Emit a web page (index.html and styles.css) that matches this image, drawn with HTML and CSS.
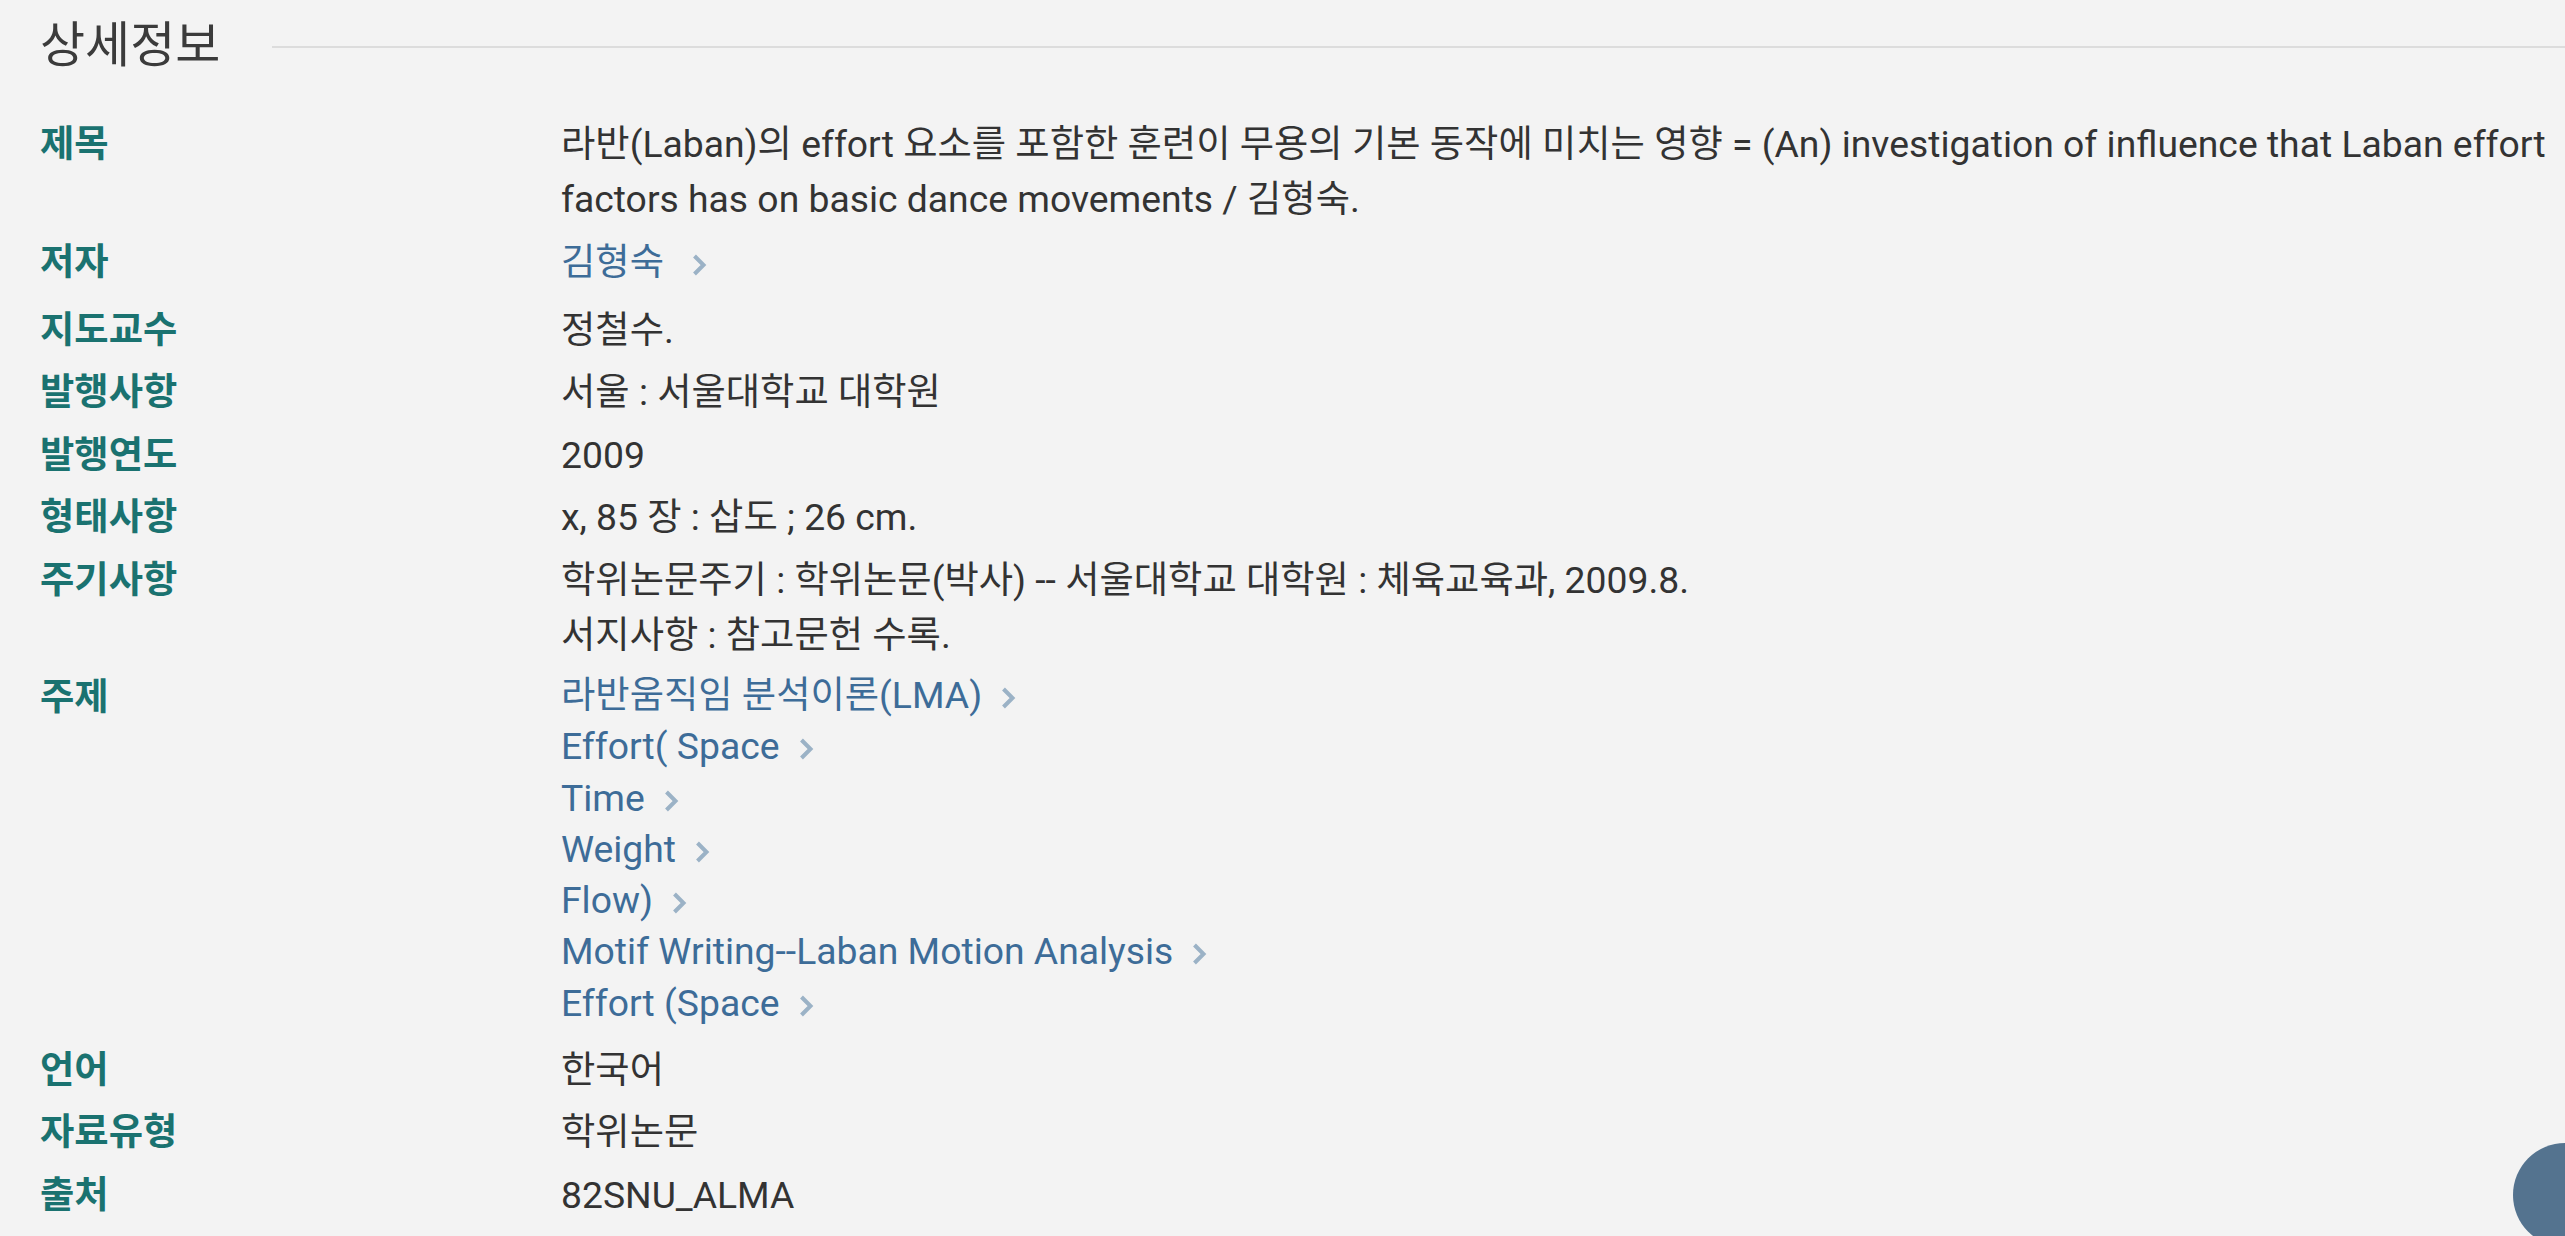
FILE: index.html
```html
<!DOCTYPE html>
<html lang="ko">
<head>
<meta charset="utf-8">
<title>상세정보</title>
<link rel="stylesheet" href="styles.css">
</head>
<body>
<div class="detail">
  <div class="section-head">
    <h2 class="section-title">상세정보</h2>
    <span class="section-rule"></span>
  </div>
  <dl class="fields">
    <div class="row">
      <dt class="label">제목</dt>
      <dd class="value">라반(Laban)의 effort 요소를 포함한 훈련이 무용의 기본 동작에 미치는 영향 = (An) investigation of influence that Laban effort factors has on basic dance movements / 김형숙.</dd>
    </div>
    <div class="row row-author">
      <dt class="label">저자</dt>
      <dd class="value"><a class="link" href="#">김형숙<svg class="chev chev-author" viewBox="0 0 15 24" width="15" height="24"><path d="M2.5 3 L11.5 12 L2.5 21"/></svg></a></dd>
    </div>
    <div class="row">
      <dt class="label">지도교수</dt>
      <dd class="value">정철수.</dd>
    </div>
    <div class="row">
      <dt class="label">발행사항</dt>
      <dd class="value">서울 : 서울대학교 대학원</dd>
    </div>
    <div class="row">
      <dt class="label">발행연도</dt>
      <dd class="value">2009</dd>
    </div>
    <div class="row">
      <dt class="label">형태사항</dt>
      <dd class="value">x, 85 장 : 삽도 ; 26 cm.</dd>
    </div>
    <div class="row">
      <dt class="label">주기사항</dt>
      <dd class="value">학위논문주기 : 학위논문(박사) -- 서울대학교 대학원 : 체육교육과, 2009.8.<br>서지사항 : 참고문헌 수록.</dd>
    </div>
    <div class="row">
      <dt class="label">주제</dt>
      <dd class="value">
        <ul class="subjects">
          <li><a class="link" href="#">라반움직임 분석이론(LMA)<svg class="chev" viewBox="0 0 15 24" width="15" height="24"><path d="M2.5 3 L11.5 12 L2.5 21"/></svg></a></li>
          <li><a class="link" href="#">Effort( Space<svg class="chev" viewBox="0 0 15 24" width="15" height="24"><path d="M2.5 3 L11.5 12 L2.5 21"/></svg></a></li>
          <li><a class="link" href="#">Time<svg class="chev" viewBox="0 0 15 24" width="15" height="24"><path d="M2.5 3 L11.5 12 L2.5 21"/></svg></a></li>
          <li><a class="link" href="#">Weight<svg class="chev" viewBox="0 0 15 24" width="15" height="24"><path d="M2.5 3 L11.5 12 L2.5 21"/></svg></a></li>
          <li><a class="link" href="#">Flow)<svg class="chev" viewBox="0 0 15 24" width="15" height="24"><path d="M2.5 3 L11.5 12 L2.5 21"/></svg></a></li>
          <li><a class="link" href="#">Motif Writing--Laban Motion Analysis<svg class="chev" viewBox="0 0 15 24" width="15" height="24"><path d="M2.5 3 L11.5 12 L2.5 21"/></svg></a></li>
          <li><a class="link" href="#">Effort (Space<svg class="chev" viewBox="0 0 15 24" width="15" height="24"><path d="M2.5 3 L11.5 12 L2.5 21"/></svg></a></li>
        </ul>
      </dd>
    </div>
    <div class="row">
      <dt class="label">언어</dt>
      <dd class="value">한국어</dd>
    </div>
    <div class="row">
      <dt class="label">자료유형</dt>
      <dd class="value">학위논문</dd>
    </div>
    <div class="row">
      <dt class="label">출처</dt>
      <dd class="value">82SNU_ALMA</dd>
    </div>
  </dl>
</div>
<a class="fab" href="#" aria-label="맨 위로"></a>
</body>
</html>
```

FILE: styles.css
```css
html, body {
  margin: 0;
  padding: 0;
  background: #f3f3f3;
}
body {
  font-family: Roboto, "Noto Sans CJK KR", "Noto Sans", sans-serif;
  color: #333333;
  overflow: hidden;
}
.detail {
  padding: 18px 0 0 40px;
}
.section-head {
  display: flex;
  align-items: center;
}
.section-title {
  margin: 0;
  font-size: 49px;
  font-weight: 400;
  line-height: 55px;
  color: #3b3b3b;
}
.section-rule {
  flex: 1;
  height: 2px;
  background: #dcdcdc;
  margin: 3px 0 0 52px;
}
.fields {
  margin: 44px 0 0 0;
  padding: 0;
}
.row {
  display: grid;
  grid-template-columns: 521px 1fr;
  margin-bottom: 7.5px;
  font-size: 37.3px;
  line-height: 55px;
}
.row-author {
  padding-bottom: 5.5px;
}
.label {
  margin: 0;
  font-weight: 700;
  color: #1a7270;
}
.value {
  margin: 0;
  color: #333333;
}
.link {
  color: #3d6c98;
  text-decoration: none;
}
.chev {
  fill: none;
  stroke: #9bb2c6;
  stroke-width: 4;
  vertical-align: -2px;
  margin-left: 19px;
}
.chev-author {
  margin-left: 28px;
}
.subjects {
  list-style: none;
  margin: 0 0 6px 0;
  padding: 0;
  line-height: 51.3px;
}
.fab {
  position: fixed;
  right: -52px;
  bottom: -11px;
  width: 104px;
  height: 104px;
  border-radius: 50%;
  background: #54738f;
}
```
